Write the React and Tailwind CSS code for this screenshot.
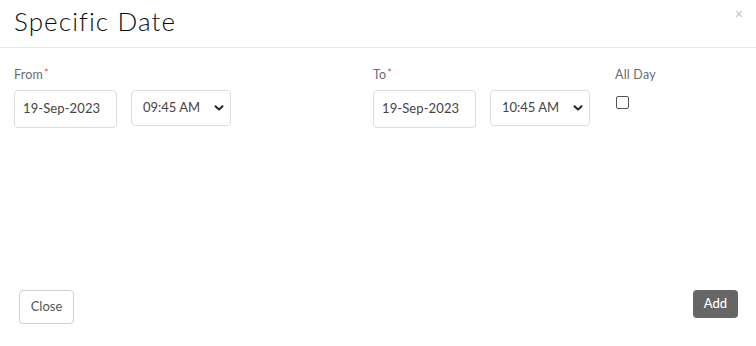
import React from "react";

function Label({ children, required }) {
  return (
    <div className="h-[16px] text-[12.5px] leading-[16px] text-[#6c6c6c] flex items-start tracking-[0.2px]">
      <span>{children}</span>
      {required && <span className="text-[#e05a5a] text-[11px] leading-[12px] ml-[1px]">*</span>}
    </div>
  );
}

function DateBox({ value }) {
  return (
    <div className="w-[103px] h-[38px] border border-[#dcdcdc] rounded-[4px] flex items-center pl-[8px] text-[13px] text-[#444] tracking-[0.1px]">
      {value}
    </div>
  );
}

function TimeSelect({ value }) {
  return (
    <div className="w-[100px] h-[36px] border border-[#dcdcdc] rounded-[4px] flex items-center justify-between pl-[11px] pr-[6px] text-[13px] text-[#444]">
      <span>{value}</span>
      <svg width="10" height="8" viewBox="0 0 10 8" fill="none">
        <path d="M1.5 2.2 L5 5.6 L8.5 2.2" stroke="#222" strokeWidth="2" strokeLinecap="round" strokeLinejoin="round" />
      </svg>
    </div>
  );
}

export default function App() {
  return (
    <div
      className="w-[756px] h-[346px] bg-white flex flex-col relative"
      style={{ fontFamily: "Lato, 'Noto Sans', sans-serif" }}
    >
      <div className="h-[48px] border-b border-[#e8e8e8] px-[14px] pt-[5px]">
        <h1 className="text-[26px] leading-[32px] text-[#0a0a0a] font-light tracking-[1.1px]">Specific Date</h1>
      </div>
      <button className="absolute right-[12px] top-[9px] w-[10px] h-[10px] flex items-center justify-center">
        <svg width="8" height="8" viewBox="0 0 8 8">
          <path d="M1 1 L7 7 M7 1 L1 7" stroke="#c8c8c8" strokeWidth="1.3" />
        </svg>
      </button>

      <div className="flex-1 px-[14px] pt-[19px]">
        <div className="flex items-start">
          <div className="w-[359px]">
            <Label required>From</Label>
            <div className="flex items-start mt-[7px] gap-[14px]">
              <DateBox value="19-Sep-2023" />
              <TimeSelect value="09:45 AM" />
            </div>
          </div>
          <div className="w-[241px]">
            <Label required>To</Label>
            <div className="flex items-start mt-[7px] gap-[14px]">
              <DateBox value="19-Sep-2023" />
              <TimeSelect value="10:45 AM" />
            </div>
          </div>
          <div className="pl-[1px]">
            <Label>All Day</Label>
            <div className="mt-[13px] w-[13px] h-[13px] border border-[#555] rounded-[2px] bg-white ml-[1px]" />
          </div>
        </div>
      </div>

      <div className="h-[56px] flex items-start justify-between pl-[19px] pr-[18px]">
        <button className="w-[55px] h-[34px] border border-[#d0d0d0] rounded-[4px] text-[13px] text-[#555] bg-white">
          Close
        </button>
        <button className="w-[45px] h-[28px] rounded-[4px] bg-[#666666] text-white text-[13px] font-medium">
          Add
        </button>
      </div>
    </div>
  );
}
